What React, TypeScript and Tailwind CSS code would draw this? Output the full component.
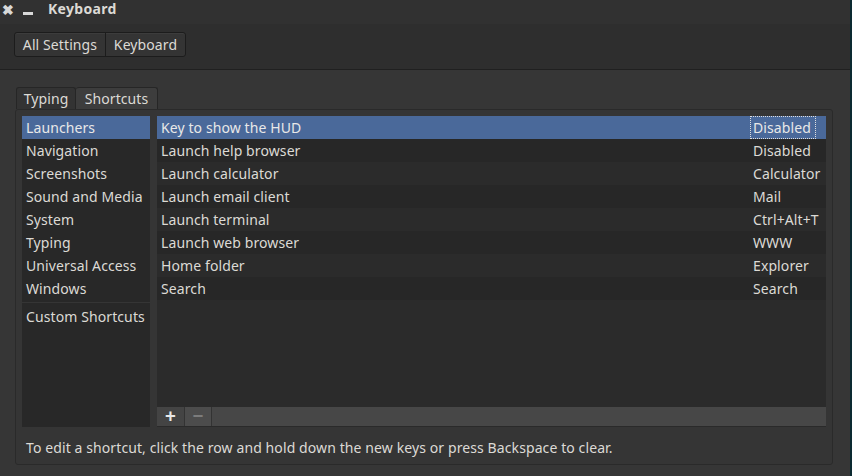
import React from "react";

const leftItems = [
  "Launchers",
  "Navigation",
  "Screenshots",
  "Sound and Media",
  "System",
  "Typing",
  "Universal Access",
  "Windows",
];

const rows: [string, string][] = [
  ["Key to show the HUD", "Disabled"],
  ["Launch help browser", "Disabled"],
  ["Launch calculator", "Calculator"],
  ["Launch email client", "Mail"],
  ["Launch terminal", "Ctrl+Alt+T"],
  ["Launch web browser", "WWW"],
  ["Home folder", "Explorer"],
  ["Search", "Search"],
];

export default function App() {
  return (
    <div className="w-[852px] h-[476px] flex bg-[#0c2a31] overflow-hidden">
      <div
        className="w-[850px] h-full flex flex-col bg-[#363636] text-[#dcdad5] text-[14px] tracking-[0.1px]"
        style={{ fontFamily: '"Noto Sans", "Open Sans", sans-serif' }}
      >
        {/* title bar */}
        <div className="h-[24px] flex items-center bg-[#313131]">
          <span className="ml-[2px] w-[13px] text-[14px] leading-none text-[#d8d8d8] font-bold -mt-[4px]">✖</span>
          <span className="ml-[8px] mt-[2px] w-[10px] h-[3px] bg-[#d8d8d8]" />
          <span className="ml-[15px] font-bold text-[14px] leading-none -mt-[6px] text-[#dcdad5] tracking-[0.3px]">
            Keyboard
          </span>
        </div>
        {/* toolbar */}
        <div className="h-[46px] bg-[#2e2e2e] border-b border-[#202020] pl-[14px] pt-[8px]">
          <div className="flex h-[25px] w-fit rounded-[3px] border border-[#1c1c1c] bg-[#343434] shadow-[inset_0_1px_0_#3c3c3c]">
            <div className="w-[91px] flex items-center justify-center border-r border-[#1c1c1c]">All Settings</div>
            <div className="w-[79px] flex items-center justify-center">Keyboard</div>
          </div>
        </div>
        {/* content */}
        <div className="flex-1 flex flex-col pl-[15px] pt-[17px]">
          <div className="flex pl-[1px] h-[22px]">
            <div className="w-[60px] flex items-center justify-center border border-b-0 border-[#262626] rounded-t-[3px] bg-[#333333]">
              Typing
            </div>
            <div className="w-[82px] flex items-center justify-center border border-b-0 border-l-0 border-[#262626] rounded-t-[3px] bg-[#3d3d3d]">
              Shortcuts
            </div>
          </div>
          <div className="w-[818px] h-[356px] border border-[#2a2a2a] rounded-[3px] bg-[#353535] flex flex-col">
            <div className="flex pl-[6px] pt-[6px] gap-[7px]">
              {/* left list */}
              <div className="w-[128px] h-[311px] bg-[#282828] flex flex-col">
                {leftItems.map((t, i) => (
                  <div
                    key={t}
                    className={`h-[23px] flex items-center pl-[4px] ${i === 0 ? "bg-[#4a699a] text-[#e8e8e8]" : ""}`}
                  >
                    {t}
                  </div>
                ))}
                <div className="h-[1px] bg-[#353535] mt-[2px]" />
                <div className="h-[23px] flex items-center pl-[4px] mt-[2px]">Custom Shortcuts</div>
              </div>
              {/* tree */}
              <div className="w-[669px] h-[311px] flex flex-col">
                <div className="flex-1 bg-[#2b2b2b] flex flex-col">
                  {rows.map(([a, b], i) => (
                    <div
                      key={a}
                      className={`h-[23px] flex items-center ${
                        i === 0 ? "bg-[#4a699a] text-[#e8e8e8]" : i % 2 === 1 ? "bg-[#272727]" : "bg-[#2b2b2b]"
                      }`}
                    >
                      <div className="pl-[4px] w-[593px]">{a}</div>
                      <div
                        className={`h-[23px] flex items-center pl-[2px] ${
                          i === 0 ? "border border-dotted border-[#e0e0e0] w-[66px]" : "pl-[3px]"
                        }`}
                      >
                        {b}
                      </div>
                    </div>
                  ))}
                </div>
                <div className="h-[20px] flex bg-[#464646] border-b border-[#2a2a2a]">
                  <div className="w-[28px] flex items-center justify-center border-r border-[#333] bg-[#444444] text-[#e8e8e8] text-[19px] font-bold leading-none">
                    +
                  </div>
                  <div className="w-[27px] flex items-center justify-center border-r border-[#333] bg-[#4c4c4c] text-[#7c7c7c] text-[19px] font-bold leading-none">
                    −
                  </div>
                  <div className="flex-1 bg-[#474747]" />
                </div>
              </div>
            </div>
            <div className="pl-[10px] mt-[10px]">
              To edit a shortcut, click the row and hold down the new keys or press Backspace to clear.
            </div>
          </div>
        </div>
      </div>
    </div>
  );
}
